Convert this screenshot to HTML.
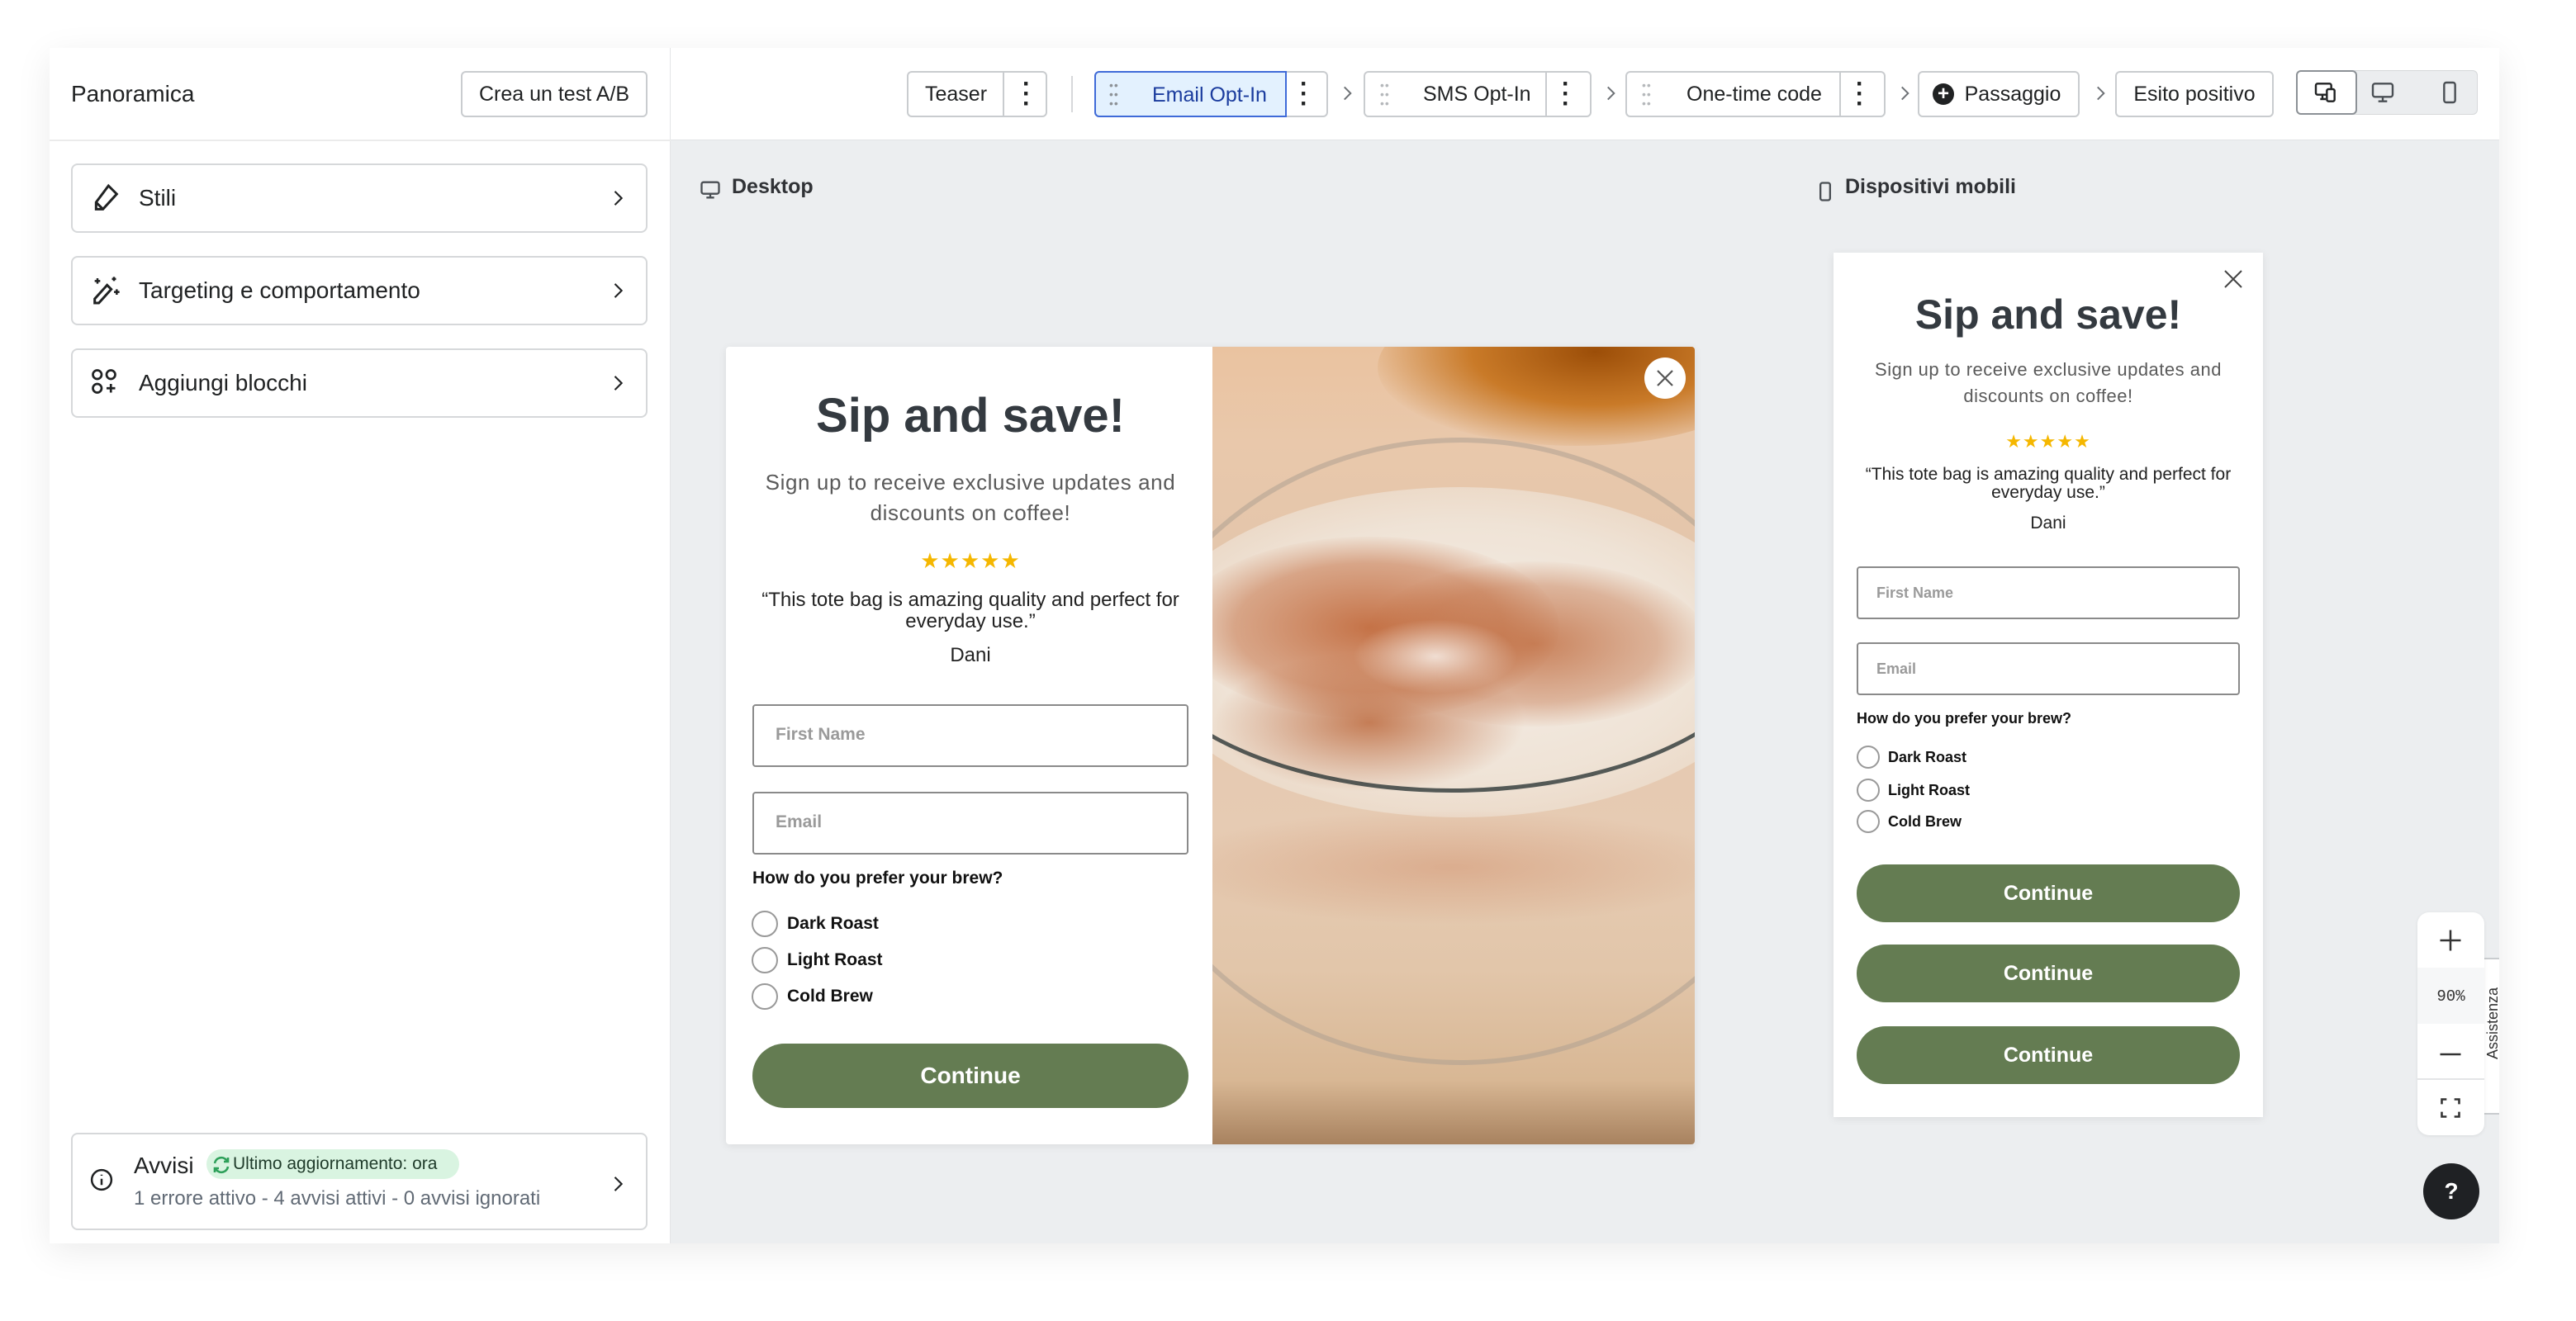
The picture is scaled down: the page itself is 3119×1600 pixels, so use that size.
<!DOCTYPE html>
<html><head><meta charset="utf-8">
<style>
*{box-sizing:border-box;margin:0;padding:0}
body{width:3119px;height:1600px;background:#fff;font-family:"Liberation Sans",sans-serif;position:relative;overflow:hidden;color:#202223}
.a{position:absolute}
.frame{left:60px;top:58px;width:2966px;height:1448px;background:#eceef0;box-shadow:0 10px 40px rgba(0,0,0,.08)}
.left{left:60px;top:58px;width:752px;height:1448px;background:#fff;border-right:1px solid #e4e5e7}
.top{left:812px;top:58px;width:2214px;height:112px;background:#fff;border-bottom:1px solid #e1e3e5}
.card{position:absolute;background:#fff;border:2px solid #d6d8da;border-radius:8px}
.btn{position:absolute;background:#fff;border:2px solid #c9cccf;border-radius:6px;font-size:25px;display:flex;align-items:center;justify-content:center;color:#202223}
.inp{position:absolute;border:2px solid #8a8a8a;border-radius:4px;background:#fff;color:#9a9a9a;font-weight:bold}
.rad{position:absolute;border:2px solid #999;border-radius:50%;background:#fff}
.gbtn{position:absolute;background:#647c52;color:#fff;font-weight:bold;border-radius:40px;display:flex;align-items:center;justify-content:center}
.dots{position:absolute;font-size:30px;font-weight:bold;line-height:12px}
.grip{position:absolute;font-size:14px;line-height:11px;letter-spacing:1px}
.bl{position:absolute;border-radius:50%}
</style></head><body>
<div class="a frame"></div>
<div class="a left"></div>
<div class="a" style="left:60px;top:169px;width:752px;height:2px;background:#ebebeb"></div>
<div class="a" style="left:86px;top:98px;font-size:28px;">Panoramica</div>
<div class="btn" style="left:558px;top:86px;width:226px;height:56px;">Crea un test A/B</div>

<svg width="0" height="0" style="position:absolute"><defs><symbol id="chv" viewBox="0 0 24 24"><path d="M9 5l7 7-7 7" fill="none" stroke="currentColor" stroke-width="1.8"/></symbol></defs></svg>

<div class="card" style="left:86px;top:198px;width:698px;height:84px;"></div>
<svg class="a" style="left:108px;top:220px" width="40" height="40" viewBox="0 0 24 24" fill="none" stroke="#202223" stroke-width="1.8"><path d="M14 3l6 6-10 11H5v-5z"/><path d="M5 15l5 5"/></svg>
<div class="a" style="left:168px;top:224px;font-size:28px">Stili</div>
<svg class="a" style="left:734px;top:226px;color:#202223" width="28" height="28"><use href="#chv"/></svg>

<div class="card" style="left:86px;top:310px;width:698px;height:84px;"></div>
<svg class="a" style="left:108px;top:332px" width="40" height="40" viewBox="0 0 24 24" fill="none" stroke="#202223" stroke-width="1.8"><path d="M13 8l3 3-9 10H4v-3z"/><path d="M6 3v4M4 5h4M18 2v3M16.5 3.5h3M20 11v4M18 13h4" stroke-width="1.5"/></svg>
<div class="a" style="left:168px;top:336px;font-size:28px">Targeting e comportamento</div>
<svg class="a" style="left:734px;top:338px;color:#202223" width="28" height="28"><use href="#chv"/></svg>

<div class="card" style="left:86px;top:422px;width:698px;height:84px;"></div>
<svg class="a" style="left:108px;top:444px" width="36" height="36" viewBox="0 0 24 24" fill="none" stroke="#202223" stroke-width="1.8"><rect x="3" y="3" width="7" height="7" rx="3.5"/><rect x="14" y="3" width="7" height="7" rx="3.5"/><rect x="3" y="14" width="7" height="7" rx="3.5"/><path d="M17.5 14v7M14 17.5h7"/></svg>
<div class="a" style="left:168px;top:448px;font-size:28px">Aggiungi blocchi</div>
<svg class="a" style="left:734px;top:450px;color:#202223" width="28" height="28"><use href="#chv"/></svg>

<div class="card" style="left:86px;top:1372px;width:698px;height:118px;"></div>
<svg class="a" style="left:108px;top:1414px" width="30" height="30" viewBox="0 0 24 24" fill="none" stroke="#202223" stroke-width="2"><circle cx="12" cy="12" r="9.5"/><path d="M12 11v6M12 7v1"/></svg>
<div class="a" style="left:162px;top:1396px;font-size:28px">Avvisi</div>
<div class="a" style="left:250px;top:1392px;height:36px;width:306px;background:#d9f4e1;border-radius:18px;font-size:21px;color:#1f3b2a;padding:6px 0 0 32px">Ultimo aggiornamento: ora</div>
<svg class="a" style="left:256px;top:1399px" width="24" height="24" viewBox="0 0 24 24" fill="none" stroke="#2ea05a" stroke-width="2.6"><path d="M4 10a8 8 0 0 1 14-4l2 2M20 14a8 8 0 0 1-14 4l-2-2"/><path d="M20 3v5h-5M4 21v-5h5"/></svg>
<div class="a" style="left:162px;top:1438px;font-size:24px;color:#616a75">1 errore attivo - 4 avvisi attivi - 0 avvisi ignorati</div>
<svg class="a" style="left:734px;top:1420px;color:#202223" width="28" height="28"><use href="#chv"/></svg>

<div class="a top"></div>
<!-- toolbar -->
<div class="btn" style="left:1098px;top:86px;width:170px;height:56px;justify-content:flex-start;padding-left:20px">Teaser</div>
<div class="a" style="left:1214px;top:88px;width:2px;height:52px;background:#c9cccf"></div>
<div class="dots" style="left:1238px;top:96px">·<br>·<br>·</div>
<div class="a" style="left:1297px;top:92px;width:2px;height:44px;background:#d6d8da"></div>

<div class="btn" style="left:1325px;top:86px;width:283px;height:56px;"></div>
<div class="a" style="left:1325px;top:86px;width:233px;height:56px;background:#e3f1fe;border:2px solid #3f6ad8;border-radius:6px 0 0 6px;color:#1b3c9e;font-size:25px;padding:13px 0 0 68px">Email Opt-In</div>
<div class="grip" style="left:1343px;top:98px;color:#8c9196">••<br>••<br>••</div>
<div class="dots" style="left:1574px;top:96px">·<br>·<br>·</div>
<svg class="a" style="left:1618px;top:100px;color:#6d7175" width="26" height="26"><use href="#chv"/></svg>

<div class="btn" style="left:1651px;top:86px;width:276px;height:56px;justify-content:flex-start;padding-left:70px">SMS Opt-In</div>
<div class="grip" style="left:1671px;top:98px;color:#b5b8bb">••<br>••<br>••</div>
<div class="a" style="left:1871px;top:88px;width:2px;height:52px;background:#c9cccf"></div>
<div class="dots" style="left:1891px;top:96px">·<br>·<br>·</div>
<svg class="a" style="left:1937px;top:100px;color:#6d7175" width="26" height="26"><use href="#chv"/></svg>

<div class="btn" style="left:1968px;top:86px;width:315px;height:56px;justify-content:flex-start;padding-left:72px">One-time code</div>
<div class="grip" style="left:1988px;top:98px;color:#b5b8bb">••<br>••<br>••</div>
<div class="a" style="left:2227px;top:88px;width:2px;height:52px;background:#c9cccf"></div>
<div class="dots" style="left:2247px;top:96px">·<br>·<br>·</div>
<svg class="a" style="left:2293px;top:100px;color:#6d7175" width="26" height="26"><use href="#chv"/></svg>

<div class="btn" style="left:2322px;top:86px;width:196px;height:56px;padding-left:34px">Passaggio</div>
<div class="a" style="left:2340px;top:101px;width:26px;height:26px;border-radius:50%;background:#202223;color:#fff;font-size:24px;font-weight:bold;text-align:center;line-height:26px">+</div>
<svg class="a" style="left:2530px;top:100px;color:#6d7175" width="26" height="26"><use href="#chv"/></svg>
<div class="btn" style="left:2561px;top:86px;width:192px;height:56px;">Esito positivo</div>

<div class="a" style="left:2780px;top:85px;width:220px;height:54px;background:#ebedef;border:1px solid #d6d8da;border-radius:6px"></div>
<div class="a" style="left:2780px;top:85px;width:74px;height:54px;background:#fff;border:2px solid #8c9196;border-radius:6px"></div>
<svg class="a" style="left:2800px;top:96px" width="32" height="32" viewBox="0 0 24 24" fill="none" stroke="#202223" stroke-width="1.8"><rect x="3" y="4" width="14" height="10" rx="1.5"/><path d="M7 18h5M9 14v4"/><rect x="13" y="9" width="7" height="11" rx="1.5" fill="#fff"/></svg>
<svg class="a" style="left:2869px;top:96px" width="32" height="32" viewBox="0 0 24 24" fill="none" stroke="#4a4f54" stroke-width="1.8"><rect x="3" y="4" width="18" height="12" rx="2"/><path d="M8 20h8M12 16v4"/></svg>
<svg class="a" style="left:2950px;top:96px" width="32" height="32" viewBox="0 0 24 24" fill="none" stroke="#4a4f54" stroke-width="1.8"><rect x="7" y="3" width="10" height="18" rx="2"/></svg>

<!-- labels -->
<svg class="a" style="left:846px;top:216px" width="28" height="28" viewBox="0 0 24 24" fill="none" stroke="#4a4f54" stroke-width="2"><rect x="3" y="4" width="18" height="12" rx="2"/><path d="M8 20h8M12 16v4"/></svg>
<div class="a" style="left:886px;top:212px;font-size:25px;font-weight:bold;color:#303236">Desktop</div>
<svg class="a" style="left:2196px;top:218px" width="28" height="28" viewBox="0 0 24 24" fill="none" stroke="#4a4f54" stroke-width="2"><rect x="7" y="3" width="10" height="18" rx="2"/></svg>
<div class="a" style="left:2234px;top:212px;font-size:25px;font-weight:bold;color:#303236">Dispositivi mobili</div>

<!-- desktop popup -->
<div class="a" style="left:879px;top:420px;width:1173px;height:966px;background:#fff;border-radius:4px;box-shadow:0 2px 10px rgba(0,0,0,.08)"></div>
<div class="a" style="left:1468px;top:420px;width:584px;height:966px;overflow:hidden;border-radius:0 4px 4px 0;background:linear-gradient(180deg,#eac3a0 0%,#e9c8ab 12%,#e4c6ab 25%,#e6cbb3 60%,#e2c6aa 78%,#d8b794 92%,#a8825f 100%)">
  <div class="bl" style="left:200px;top:-70px;width:480px;height:190px;background:radial-gradient(ellipse at 55% 40%,#9c4e08 0%,#c97a28 40%,rgba(220,150,90,0) 75%)"></div>
  <div class="bl" style="left:-120px;top:110px;width:840px;height:760px;border:6px solid rgba(175,160,145,.55)"></div>
  <div class="bl" style="left:-80px;top:170px;width:760px;height:400px;background:radial-gradient(ellipse at 50% 50%,#f5eee7 0%,#efe3d6 55%,rgba(239,227,214,.6) 75%,rgba(239,227,214,0) 90%)"></div>
  <div class="bl" style="left:-40px;top:230px;width:460px;height:220px;background:radial-gradient(ellipse,rgba(192,102,55,.9),rgba(192,102,55,.5) 50%,rgba(192,102,55,0) 72%)"></div>
  <div class="bl" style="left:180px;top:260px;width:420px;height:200px;background:radial-gradient(ellipse,rgba(190,104,58,.8),rgba(190,104,58,.4) 50%,rgba(190,104,58,0) 72%)"></div>
  <div class="bl" style="left:0px;top:370px;width:380px;height:170px;background:radial-gradient(ellipse,rgba(185,98,52,.8),rgba(185,98,52,0) 70%)"></div>
  <div class="bl" style="left:170px;top:330px;width:200px;height:90px;background:radial-gradient(ellipse,rgba(250,245,240,.8),rgba(250,245,240,0) 70%)"></div>
  <div class="bl" style="left:-110px;top:120px;width:800px;height:420px;border:5px solid transparent;border-bottom-color:rgba(45,55,55,.8)"></div>
  <div class="bl" style="left:-60px;top:560px;width:700px;height:140px;background:radial-gradient(ellipse,rgba(200,120,80,.35),rgba(200,120,80,0) 70%)"></div>
</div>
<div class="a" style="left:1991px;top:433px;width:50px;height:50px;border-radius:50%;background:#fff"></div>
<svg class="a" style="left:2004px;top:446px" width="24" height="24" viewBox="0 0 24 24" stroke="#555" stroke-width="2.2"><path d="M3 3l18 18M21 3L3 21"/></svg>

<div class="a" style="left:882px;top:470px;width:586px;text-align:center;font-size:58px;font-weight:bold;color:#343a40">Sip and save!</div>
<div class="a" style="left:900px;top:566px;width:550px;text-align:center;font-size:26px;line-height:37px;color:#5a5a5a;letter-spacing:.6px">Sign up to receive exclusive updates and discounts on coffee!</div>
<div class="a" style="left:882px;top:664px;width:586px;text-align:center;font-size:26px;color:#f5b700;letter-spacing:1px">★★★★★</div>
<div class="a" style="left:904px;top:714px;width:542px;text-align:center;font-size:24px;line-height:26px;color:#222">“This tote bag is amazing quality and perfect for everyday use.”</div>
<div class="a" style="left:882px;top:780px;width:586px;text-align:center;font-size:24px;color:#222">Dani</div>
<div class="inp" style="left:911px;top:853px;width:528px;height:76px;font-size:21px;padding:23px 0 0 26px">First Name</div>
<div class="inp" style="left:911px;top:959px;width:528px;height:76px;font-size:21px;padding:23px 0 0 26px">Email</div>
<div class="a" style="left:911px;top:1052px;font-size:21px;font-weight:bold;color:#111">How do you prefer your brew?</div>
<div class="rad" style="left:910px;top:1103px;width:32px;height:32px"></div>
<div class="a" style="left:953px;top:1107px;font-size:21px;font-weight:bold;color:#111">Dark Roast</div>
<div class="rad" style="left:910px;top:1147px;width:32px;height:32px"></div>
<div class="a" style="left:953px;top:1151px;font-size:21px;font-weight:bold;color:#111">Light Roast</div>
<div class="rad" style="left:910px;top:1191px;width:32px;height:32px"></div>
<div class="a" style="left:953px;top:1195px;font-size:21px;font-weight:bold;color:#111">Cold Brew</div>
<div class="gbtn" style="left:911px;top:1264px;width:528px;height:78px;font-size:28px">Continue</div>

<!-- mobile popup -->
<div class="a" style="left:2220px;top:306px;width:520px;height:1047px;background:#fff;box-shadow:0 2px 10px rgba(0,0,0,.08)"></div>
<svg class="a" style="left:2692px;top:326px" width="24" height="24" viewBox="0 0 24 24" stroke="#444" stroke-width="2"><path d="M2 2l20 20M22 2L2 22"/></svg>
<div class="a" style="left:2220px;top:352px;width:520px;text-align:center;font-size:50px;font-weight:bold;color:#343a40">Sip and save!</div>
<div class="a" style="left:2244px;top:432px;width:472px;text-align:center;font-size:22px;line-height:32px;color:#5a5a5a;letter-spacing:.5px">Sign up to receive exclusive updates and discounts on coffee!</div>
<div class="a" style="left:2220px;top:522px;width:520px;text-align:center;font-size:22px;color:#f5b700;letter-spacing:1px">★★★★★</div>
<div class="a" style="left:2244px;top:564px;width:472px;text-align:center;font-size:21px;line-height:22px;color:#222">“This tote bag is amazing quality and perfect for everyday use.”</div>
<div class="a" style="left:2220px;top:622px;width:520px;text-align:center;font-size:21px;color:#222">Dani</div>
<div class="inp" style="left:2248px;top:686px;width:464px;height:64px;font-size:18px;padding:20px 0 0 22px">First Name</div>
<div class="inp" style="left:2248px;top:778px;width:464px;height:64px;font-size:18px;padding:20px 0 0 22px">Email</div>
<div class="a" style="left:2248px;top:860px;font-size:18px;font-weight:bold;color:#111">How do you prefer your brew?</div>
<div class="rad" style="left:2248px;top:903px;width:28px;height:28px"></div>
<div class="a" style="left:2286px;top:907px;font-size:18px;font-weight:bold;color:#111">Dark Roast</div>
<div class="rad" style="left:2248px;top:943px;width:28px;height:28px"></div>
<div class="a" style="left:2286px;top:947px;font-size:18px;font-weight:bold;color:#111">Light Roast</div>
<div class="rad" style="left:2248px;top:981px;width:28px;height:28px"></div>
<div class="a" style="left:2286px;top:985px;font-size:18px;font-weight:bold;color:#111">Cold Brew</div>
<div class="gbtn" style="left:2248px;top:1047px;width:464px;height:70px;font-size:25px">Continue</div>
<div class="gbtn" style="left:2248px;top:1144px;width:464px;height:70px;font-size:25px">Continue</div>
<div class="gbtn" style="left:2248px;top:1243px;width:464px;height:70px;font-size:25px">Continue</div>

<!-- zoom controls -->
<div class="a" style="left:3008px;top:1160px;width:18px;height:190px;background:#fff;border-top:2px solid #c9cccf;border-bottom:2px solid #c9cccf"></div>
<div class="a" style="left:3008px;top:1196px;font-size:18px;color:#333;transform:rotate(180deg);writing-mode:vertical-rl">Assistenza</div>
<div class="a" style="left:2927px;top:1105px;width:81px;height:270px;background:#fff;border-radius:14px;box-shadow:0 1px 4px rgba(0,0,0,.08)"></div>
<div class="a" style="left:2927px;top:1172px;width:81px;height:68px;background:#f6f7f8"></div>
<div class="a" style="left:2927px;top:1306px;width:81px;height:2px;background:#e4e5e7"></div>
<svg class="a" style="left:2952px;top:1124px" width="30" height="30" viewBox="0 0 24 24" stroke="#333" stroke-width="2"><path d="M12 2v20M2 12h20"/></svg>
<div class="a" style="left:2927px;top:1196px;width:81px;text-align:center;font-family:'Liberation Mono',monospace;font-size:19px;color:#333">90%</div>
<svg class="a" style="left:2952px;top:1262px" width="30" height="30" viewBox="0 0 24 24" stroke="#333" stroke-width="2"><path d="M2 12h20"/></svg>
<svg class="a" style="left:2953px;top:1328px" width="28" height="28" viewBox="0 0 24 24" fill="none" stroke="#333" stroke-width="2.2"><path d="M3 8V3h5M16 3h5v5M21 16v5h-5M8 21H3v-5"/></svg>
<div class="a" style="left:2934px;top:1409px;width:68px;height:68px;border-radius:50%;background:#1f2124;color:#fff;font-size:28px;font-weight:bold;text-align:center;line-height:68px">?</div>
</body></html>
